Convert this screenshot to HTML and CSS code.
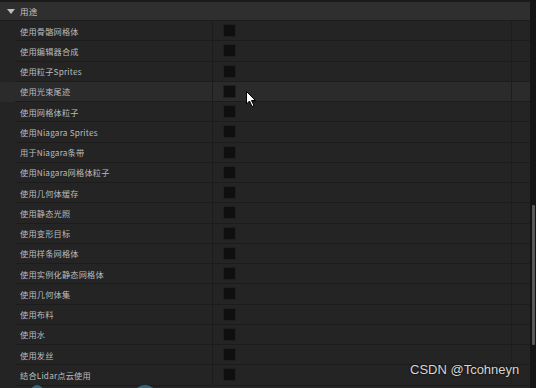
FILE: index.html
```html
<!DOCTYPE html>
<html lang="zh">
<head>
<meta charset="utf-8">
<link rel="stylesheet" href="styles.css">
</head>
<body>
<div class="panel">
  <div class="content">
    <div class="header"><span class="tri"></span><span class="htext">用途</span></div>
    <div class="row"><div class="cells"><div class="name">使用骨骼网格体</div><div class="val"><span class="cb"></span></div><div class="tail"></div></div></div>
    <div class="row"><div class="cells"><div class="name">使用编辑器合成</div><div class="val"><span class="cb"></span></div><div class="tail"></div></div></div>
    <div class="row"><div class="cells"><div class="name">使用粒子Sprites</div><div class="val"><span class="cb"></span></div><div class="tail"></div></div></div>
    <div class="row hover"><div class="cells"><div class="name">使用光束尾迹</div><div class="val"><span class="cb"></span></div><div class="tail"></div></div></div>
    <div class="row"><div class="cells"><div class="name">使用网格体粒子</div><div class="val"><span class="cb"></span></div><div class="tail"></div></div></div>
    <div class="row"><div class="cells"><div class="name">使用Niagara Sprites</div><div class="val"><span class="cb"></span></div><div class="tail"></div></div></div>
    <div class="row"><div class="cells"><div class="name">用于Niagara条带</div><div class="val"><span class="cb"></span></div><div class="tail"></div></div></div>
    <div class="row"><div class="cells"><div class="name">使用Niagara网格体粒子</div><div class="val"><span class="cb"></span></div><div class="tail"></div></div></div>
    <div class="row"><div class="cells"><div class="name">使用几何体缓存</div><div class="val"><span class="cb"></span></div><div class="tail"></div></div></div>
    <div class="row"><div class="cells"><div class="name">使用静态光照</div><div class="val"><span class="cb"></span></div><div class="tail"></div></div></div>
    <div class="row"><div class="cells"><div class="name">使用变形目标</div><div class="val"><span class="cb"></span></div><div class="tail"></div></div></div>
    <div class="row"><div class="cells"><div class="name">使用样条网格体</div><div class="val"><span class="cb"></span></div><div class="tail"></div></div></div>
    <div class="row"><div class="cells"><div class="name">使用实例化静态网格体</div><div class="val"><span class="cb"></span></div><div class="tail"></div></div></div>
    <div class="row"><div class="cells"><div class="name">使用几何体集</div><div class="val"><span class="cb"></span></div><div class="tail"></div></div></div>
    <div class="row"><div class="cells"><div class="name">使用布料</div><div class="val"><span class="cb"></span></div><div class="tail"></div></div></div>
    <div class="row"><div class="cells"><div class="name">使用水</div><div class="val"><span class="cb"></span></div><div class="tail"></div></div></div>
    <div class="row"><div class="cells"><div class="name">使用发丝</div><div class="val"><span class="cb"></span></div><div class="tail"></div></div></div>
    <div class="row"><div class="cells"><div class="name">结合Lidar点云使用</div><div class="val"><span class="cb"></span></div><div class="tail"></div></div></div>
  </div>
  <div class="track"><div class="thumb"></div></div>
</div>
<svg class="cursor" width="12" height="17" viewBox="0 0 12 17"><path d="M0.5 0.5 L0.5 13 L3.5 10 L6 15.5 L8 14.5 L5.5 9.5 L9.5 9.5 Z" fill="#fff" stroke="#000" stroke-width="1"/></svg>
<div class="blob b1"></div>
<div class="blob b2"></div>
<div class="mark">CSDN @Tcohneyn</div>
</body>
</html>
```
FILE: styles.css
```css
html, body {
  margin: 0;
  padding: 0;
  background: #161616;
  width: 536px;
  height: 388px;
  overflow: hidden;
  font-family: "Noto Sans CJK SC", "Noto Sans", sans-serif;
}
.panel {
  display: flex;
  height: 388px;
}
.content {
  width: 530px;
  background: #242424;
  box-sizing: border-box;
  border-top: 2px solid #1a1a1a;
}
.header {
  height: 19px;
  background: #2f2f2f;
  display: flex;
  align-items: center;
  border-bottom: 1px solid #1d1d1d;
  box-sizing: border-box;
}
.tri {
  width: 0;
  height: 0;
  border-left: 4px solid transparent;
  border-right: 4px solid transparent;
  border-top: 5px solid #bdbdbd;
  margin-left: 7px;
  margin-right: 5px;
}
.htext {
  color: #c4c4c4;
  font-size: 8.5px;
  letter-spacing: 0.3px;
}
.row {
  height: 20.25px;
  padding-left: 15px;
  background: #242424;
  box-sizing: border-box;
}
.row.hover {
  background: #2b2b2b;
}
.cells {
  display: flex;
  height: 100%;
  border-bottom: 1px solid #1c1c1c;
  box-sizing: border-box;
}
.name {
  width: 198px;
  padding-left: 5px;
  box-sizing: border-box;
  border-right: 1px solid #1c1c1c;
  color: #bcbcbc;
  font-size: 8.2px;
  letter-spacing: 0.2px;
  display: flex;
  align-items: center;
  white-space: nowrap;
}
.val {
  width: 299px;
  padding-left: 10px;
  box-sizing: border-box;
  border-right: 1px solid #1e1e1e;
  display: flex;
  align-items: center;
}
.tail {
  flex: 1;
}
.cb {
  width: 11px;
  height: 11px;
  background: #0f0f0f;
  border: 1px solid #1f1f1f;
  box-sizing: content-box;
}
.track {
  width: 6px;
  background: #141414;
}
.thumb {
  margin-top: 205px;
  margin-left: 2px;
  width: 3px;
  height: 140px;
  background: #575757;
  border-radius: 1px;
}
.cursor {
  position: absolute;
  left: 246px;
  top: 91px;
}
.mark {
  position: absolute;
  left: 410px;
  top: 362px;
  color: #d6d6d6;
  font-family: "Liberation Sans", Arial, sans-serif;
  font-size: 13px;
  text-shadow: 0 0 2px #000;
}
.blob {
  position: absolute;
  border-radius: 50%;
  background: #3a6878;
}
.b1 {
  left: 31px;
  top: 385px;
  width: 12px;
  height: 12px;
}
.b2 {
  left: 134px;
  top: 385px;
  width: 22px;
  height: 18px;
}
```
